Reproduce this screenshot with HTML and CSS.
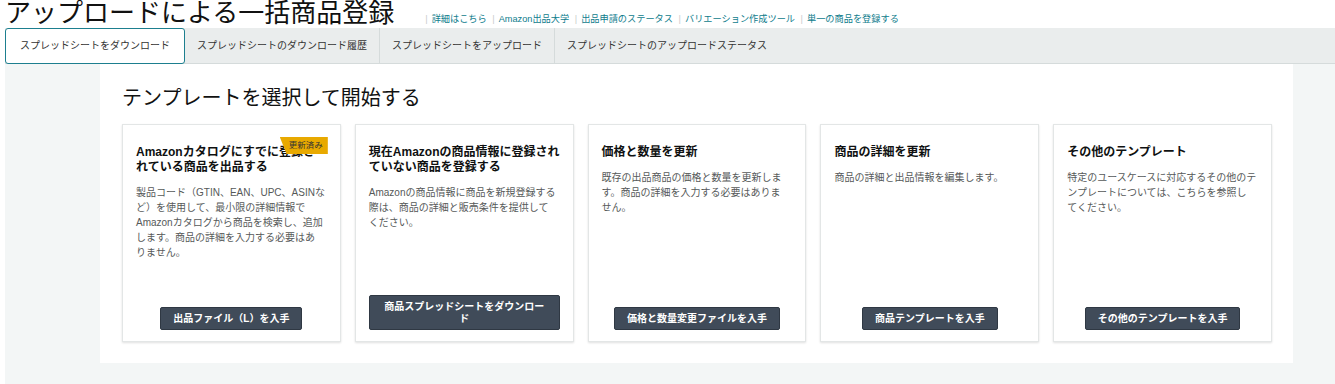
FILE: index.html
```html
<!DOCTYPE html>
<html lang="ja">
  <head>
    <meta charset="UTF-8" />
    <meta name="viewport" content="width=device-width, initial-scale=1.0" />
    <title>アップロードによる一括商品登録</title>
    <link rel="stylesheet" href="styles.css">
  </head>
  <body>
    <div class="page">
      <div class="page-header">
        <h1>アップロードによる一括商品登録</h1>
        <div class="links">
          <span class="sep">|</span><a href="#">詳細はこちら</a>
          <span class="sep">|</span><a href="#">Amazon出品大学</a>
          <span class="sep">|</span><a href="#">出品申請のステータス</a>
          <span class="sep">|</span><a href="#">バリエーション作成ツール</a>
          <span class="sep">|</span><a href="#">単一の商品を登録する</a>
        </div>
      </div>
      <div class="tabs">
        <div class="tab active">スプレッドシートをダウンロード</div>
        <div class="tab">スプレッドシートのダウンロード履歴</div>
        <div class="tab">スプレッドシートをアップロード</div>
        <div class="tab">スプレッドシートのアップロードステータス</div>
      </div>
      <div class="content">
        <div class="panel">
          <h2>テンプレートを選択して開始する</h2>
          <div class="cards">
            <div class="card">
              <span class="badge">更新済み</span>
              <h3>Amazonカタログにすでに登録さ<br />れている商品を出品する</h3>
              <p>製品コード（GTIN、EAN、UPC、ASINな<br />ど）を使用して、最小限の詳細情報で<br />Amazonカタログから商品を検索し、追加<br />します。商品の詳細を入力する必要はあ<br />りません。</p>
              <button>出品ファイル（L）を入手</button>
            </div>
            <div class="card">
              <h3>現在Amazonの商品情報に登録され<br />ていない商品を登録する</h3>
              <p>Amazonの商品情報に商品を新規登録する<br />際は、商品の詳細と販売条件を提供して<br />ください。</p>
              <button>商品スプレッドシートをダウンロード</button>
            </div>
            <div class="card">
              <h3>価格と数量を更新</h3>
              <p>既存の出品商品の価格と数量を更新しま<br />す。商品の詳細を入力する必要はありま<br />せん。</p>
              <button>価格と数量変更ファイルを入手</button>
            </div>
            <div class="card">
              <h3>商品の詳細を更新</h3>
              <p>商品の詳細と出品情報を編集します。</p>
              <button>商品テンプレートを入手</button>
            </div>
            <div class="card">
              <h3>その他のテンプレート</h3>
              <p>特定のユースケースに対応するその他のテ<br />ンプレートについては、こちらを参照し<br />てください。</p>
              <button>その他のテンプレートを入手</button>
            </div>
          </div>
        </div>
      </div>
    </div>
  </body>
</html>
```

FILE: styles.css
```css
body {
  margin: 0;
  font-family: "Liberation Sans", "Noto Sans CJK JP", sans-serif;
  color: #0f1111;
  background: #fff;
}
.page {
  padding-left: 5px;
}
.page-header {
  display: flex;
  align-items: baseline;
  height: 28px;
}
.page-header h1 {
  margin: 0;
  font-size: 26px;
  font-weight: normal;
  line-height: 26px;
  color: #111;
}
.links {
  margin-left: 28px;
  font-size: 9.2px;
}
.links a {
  color: #0e7c8c;
  text-decoration: none;
}
.links .sep {
  color: #c8cccc;
  margin: 0 4px 0 3px;
}
.tabs {
  display: flex;
  height: 35px;
  background: #eaeded;
  border-bottom: 1px solid #d5dbdb;
}
.tab {
  display: flex;
  align-items: center;
  padding: 0 12px;
  font-size: 10px;
  line-height: 14px;
  color: #333;
}
.tab:not(:last-child):not(.active) {
  border-right: 1px solid #d5dbdb;
}
.tab.active {
  padding: 0 14px;
  height: 35px;
  background: #fff;
  border: 1.5px solid #1d7f8f;
  border-radius: 3px;
  box-sizing: border-box;
  height: 36px;
}
.content {
  background: #f3f6f6;
  padding: 0 42px 21px 95px;
}
.panel {
  background: #fff;
  padding: 20px 21px 21px 22px;
}
.panel h2 {
  margin: 0 0 12px;
  font-size: 20px;
  font-weight: normal;
  line-height: 28px;
  color: #111;
}
.cards {
  display: grid;
  grid-template-columns: repeat(5, 1fr);
  gap: 14px;
}
.card {
  position: relative;
  display: flex;
  flex-direction: column;
  min-height: 218px;
  box-sizing: border-box;
  padding: 20px 4px 11px 13px;
  border: 1px solid #e3e6e6;
  box-shadow: 0 1px 2px rgba(0, 0, 0, 0.12);
}
.card h3 {
  margin: 0 0 10px;
  font-size: 12px;
  font-weight: bold;
  line-height: 15px;
  color: #0f1111;
}
.card p {
  margin: 0;
  font-size: 10px;
  line-height: 15px;
  color: #565959;
  flex: 1;
}
.card button {
  align-self: center;
  margin: 0 9px 0 0;
  max-width: 194px;
  padding: 4.5px 12px;
  font-family: inherit;
  font-size: 10px;
  font-weight: bold;
  line-height: 12px;
  color: #fff;
  background: #404b59;
  border: 1px solid #2f3843;
  border-radius: 2px;
}
.badge {
  position: absolute;
  top: 12px;
  right: 12px;
  width: 48px;
  height: 17px;
  line-height: 17px;
  padding-left: 4px;
  box-sizing: border-box;
  text-align: center;
  font-size: 8.5px;
  color: #333;
  background: #e8a900;
  clip-path: polygon(0 0, 100% 0, 100% 100%, 14% 100%);
}
```
